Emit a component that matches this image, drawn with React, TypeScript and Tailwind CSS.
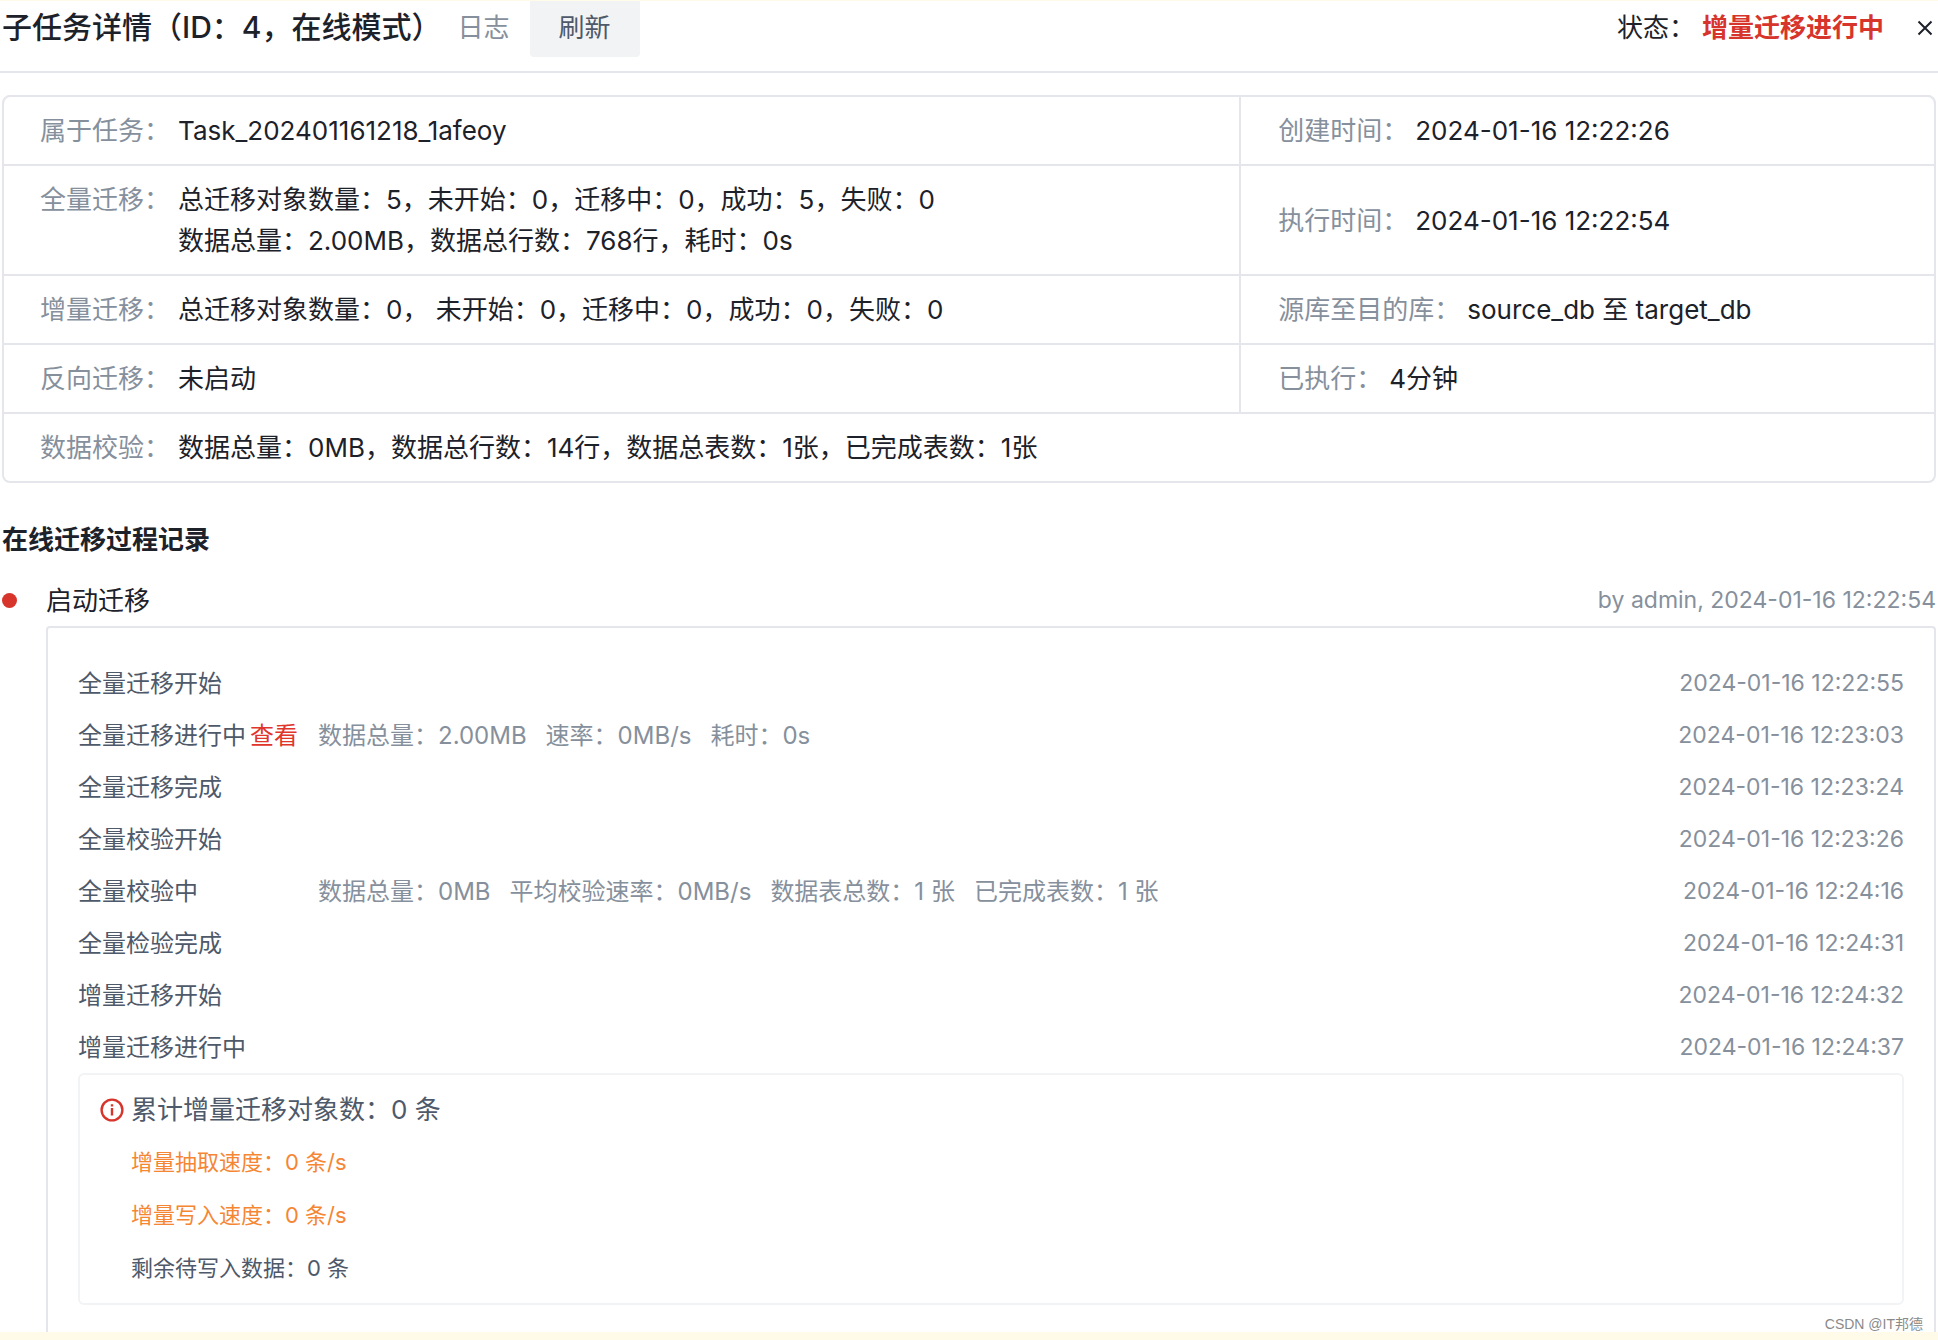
import type { ReactNode } from "react";

type Event = { name: string; time: string; link?: string; details?: string[] };

const events: Event[] = [
  { name: "全量迁移开始", time: "2024-01-16 12:22:55" },
  {
    name: "全量迁移进行中",
    link: "查看",
    time: "2024-01-16 12:23:03",
    details: ["数据总量：2.00MB", "速率：0MB/s", "耗时：0s"],
  },
  { name: "全量迁移完成", time: "2024-01-16 12:23:24" },
  { name: "全量校验开始", time: "2024-01-16 12:23:26" },
  {
    name: "全量校验中",
    time: "2024-01-16 12:24:16",
    details: ["数据总量：0MB", "平均校验速率：0MB/s", "数据表总数：1 张", "已完成表数：1 张"],
  },
  { name: "全量检验完成", time: "2024-01-16 12:24:31" },
  { name: "增量迁移开始", time: "2024-01-16 12:24:32" },
  { name: "增量迁移进行中", time: "2024-01-16 12:24:37" },
];

function Label({ children }: { children: ReactNode }) {
  return (
    <th scope="row" className="border-t-2 border-[#e5e6eb] py-[13px] pl-9 text-left align-top font-normal whitespace-nowrap text-[#86909c]">
      {children}
    </th>
  );
}

function Value({ children, colSpan }: { children: ReactNode; colSpan?: number }) {
  return (
    <td colSpan={colSpan} className="border-t-2 border-[#e5e6eb] py-[13px]">
      {children}
    </td>
  );
}

function SideCell({ label, children }: { label: string; children: ReactNode }) {
  return (
    <td className="border-t-2 border-l-2 border-[#e5e6eb] py-[13px] pl-[37px]">
      <span className="text-[#86909c]">{label}：</span>
      <span className="ml-[7px]">{children}</span>
    </td>
  );
}

export default function App() {
  return (
    <div className="bg-white pt-px font-['Inter','Noto_Sans_CJK_SC',sans-serif] text-[26px] leading-[41px] text-[#1d2129] shadow-[inset_0_1px_0_#fffbe8]">
      <header className="flex items-start border-b-2 border-[#e5e6eb] pr-1 pb-[14px] pl-[2px] leading-[53px]">
        <h1 className="text-[30px] leading-[52px] font-medium">子任务详情（ID：4，在线模式）</h1>
        <button type="button" className="ml-4 text-[#86909c]">日志</button>
        <button type="button" className="ml-5 h-14 rounded-b-sm bg-[#f2f3f5] px-[29px] pb-[3px] text-[#4e5969]">刷新</button>
        <div className="ml-auto flex items-center">
          <span>状态：</span>
          <span className="ml-[7px] font-semibold text-[#d7342b]">增量迁移进行中</span>
          <button type="button" aria-label="关闭" className="ml-8">
            <svg width="18" height="18" viewBox="0 0 18 18" fill="none" stroke="#1d2129" strokeWidth="2">
              <path d="M2.5 2.5 15.5 15.5M15.5 2.5 2.5 15.5" />
            </svg>
          </button>
        </div>
      </header>

      <main className="pr-[2px] pl-[2px]">
        <div className="mt-[22px] overflow-hidden rounded-lg border-2 border-t-0 border-[#e5e6eb] shadow-[inset_0_2px_0_#e5e6eb]">
          <table className="w-full table-fixed border-separate border-spacing-0">
            <colgroup>
              <col className="w-[174px]" />
              <col />
              <col className="w-[36%]" />
            </colgroup>
            <tbody>
              <tr>
                <Label>属于任务：</Label>
                <Value>Task_202401161218_1afeoy</Value>
                <SideCell label="创建时间">2024-01-16 12:22:26</SideCell>
              </tr>
              <tr>
                <Label>全量迁移：</Label>
                <Value>
                  总迁移对象数量：5，未开始：0，迁移中：0，成功：5，失败：0
                  <br />
                  数据总量：2.00MB，数据总行数：768行，耗时：0s
                </Value>
                <SideCell label="执行时间">2024-01-16 12:22:54</SideCell>
              </tr>
              <tr>
                <Label>增量迁移：</Label>
                <Value>总迁移对象数量：0， 未开始：0，迁移中：0，成功：0，失败：0</Value>
                <SideCell label="源库至目的库">source_db 至 target_db</SideCell>
              </tr>
              <tr>
                <Label>反向迁移：</Label>
                <Value>未启动</Value>
                <SideCell label="已执行">4分钟</SideCell>
              </tr>
              <tr>
                <Label>数据校验：</Label>
                <Value colSpan={2}>数据总量：0MB，数据总行数：14行，数据总表数：1张，已完成表数：1张</Value>
              </tr>
            </tbody>
          </table>
        </div>

        <h2 className="mt-9 font-semibold">在线迁移过程记录</h2>

        <section className="mt-5">
          <div className="flex items-center">
            <span className="size-[15px] rounded-full bg-[#d7342b]" />
            <h3 className="ml-[29px]">启动迁移</h3>
            <span className="ml-auto text-[23px] text-[#86909c]">by admin, 2024-01-16 12:22:54</span>
          </div>

          <div className="mt-[5px] ml-[44px] rounded-t border-2 border-b-0 border-[#e5e6eb] px-[30px] pt-[29px] pb-[27px]">
            <ol className="text-[24px]">
              {events.map((e) => (
                <li key={e.name} className="flex h-[52px] items-center">
                  <div className="w-[240px] whitespace-nowrap text-[#4e5969]">
                    {e.name}
                    {e.link && (
                      <a href="#detail" className="ml-1 text-[#e0352b]">
                        {e.link}
                      </a>
                    )}
                  </div>
                  <div className="flex gap-[19px] text-[#86909c]">
                    {e.details?.map((d) => (
                      <span key={d}>{d}</span>
                    ))}
                  </div>
                  <time className="ml-auto text-[23px] text-[#86909c]">{e.time}</time>
                </li>
              ))}
            </ol>

            <div className="rounded-md border-2 border-[#f2f3f5] pt-2 pb-2 pl-5 text-[#4e5969]">
              <div className="flex h-[53px] items-center">
                <svg width="24" height="24" viewBox="0 0 24 24" fill="none" stroke="#d7342b" strokeWidth="2.4">
                  <circle cx="12" cy="12" r="10.4" />
                  <path d="M12 10v7.5M12 6.2v2.4" />
                </svg>
                <span className="ml-[7px]">累计增量迁移对象数：0 条</span>
              </div>
              <ul className="pl-[31px] text-[22px]">
                <li className="flex h-[53px] items-center text-[#f58634]">增量抽取速度：0 条/s</li>
                <li className="flex h-[53px] items-center text-[#f58634]">增量写入速度：0 条/s</li>
                <li className="flex h-[53px] items-center">剩余待写入数据：0 条</li>
              </ul>
            </div>
          </div>
        </section>
      </main>

      <footer className="relative h-2 bg-[#fffbe8]">
        <span className="absolute right-[15px] bottom-1 font-['Liberation_Sans','Noto_Sans_CJK_SC',sans-serif] text-[14px] leading-6 text-[#8a8a8a]">CSDN @IT邦德</span>
      </footer>
    </div>
  );
}
